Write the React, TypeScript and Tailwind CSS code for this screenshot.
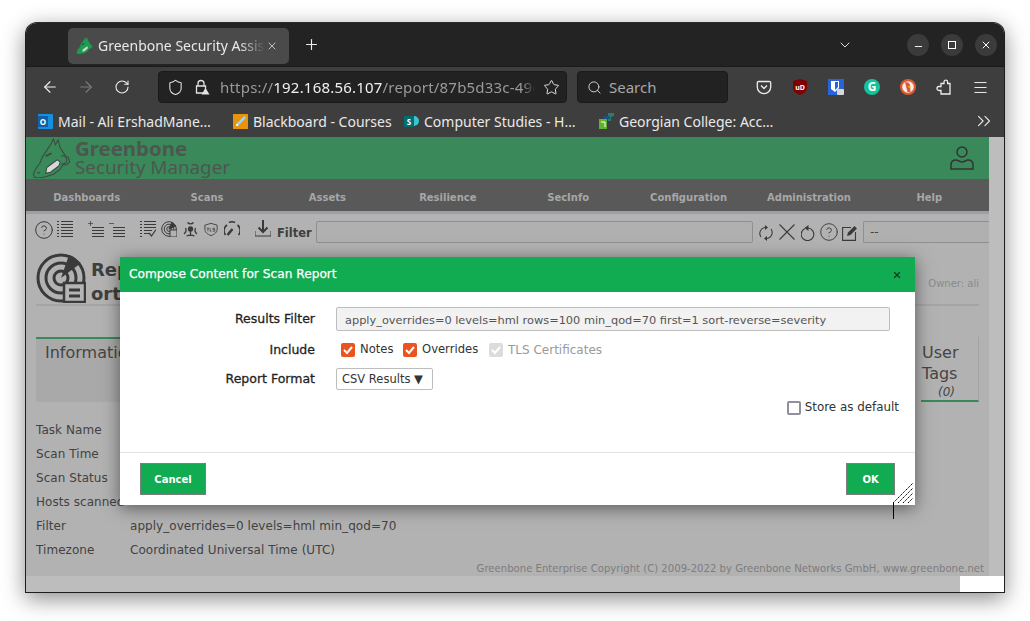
import {
  ArrowLeft,
  ArrowRight,
  ChevronDown,
  ChevronsRight,
  CircleHelp,
  Menu,
  Minus,
  Plus,
  RotateCw,
  Search,
  Shield,
  Star,
  X,
} from "lucide-react";

const navItems = ["Dashboards", "Scans", "Assets", "Resilience", "SecInfo", "Configuration", "Administration", "Help"];

const infoRows = [
  ["Task Name", ""],
  ["Scan Time", ""],
  ["Scan Status", ""],
  ["Hosts scanned", ""],
  ["Filter", "apply_overrides=0 levels=hml min_qod=70"],
  ["Timezone", "Coordinated Universal Time (UTC)"],
];

const Dragon = ({ className, filled }: { className: string; filled?: boolean }) => (
  <svg viewBox="0 0 40 42" className={className} fill={filled ? "currentColor" : "none"} stroke="currentColor" strokeWidth="1.1">
    <path d="M22 1l2 6 3-5 2 8 5 8 4 3 1 4-3 3-4 0-3 5-7 5-9 3-7 1-4-1-1-3 2-5 5-7 3-7 4-6 4-6z" />
    <path d="M15 31l11-8 3 2-1 4-9 7-5 1z" fill="#d8d8d8" />
    <path d="M14 19l6-3" strokeWidth="2" stroke={filled ? "#0c4a27" : "currentColor"} />
    <path d="M30 19c3-1 6 1 6 4s-3 5-6 4" />
    <path d="M5 36l3 1" />
  </svg>
);

const Bookmark = ({ icon, label, width }: { icon: React.ReactNode; label: string; width: string }) => (
  <div className={`flex items-center gap-[5px] ${width}`}>
    {icon}
    <span className="text-[14px] text-[#e9e9e9] whitespace-nowrap">{label}</span>
  </div>
);

const ListLines = ({ className, check }: { className: string; check?: boolean }) => (
  <svg viewBox="0 0 16 16" className={className} fill="none" stroke="currentColor" strokeWidth="1">
    <path d="M0 .5h2M0 3.500h2M0 6.500h2M0 9.500h2M0 12.500h2M0 15.500h2" strokeWidth="1" />
    {check ? (
      <>
        <path d="M4 .5h12M4 3.500h12M4 6.500h12M4 9.500h8M4 12.500h5" />
        <path d="M9 12l2.500 3L16 8.500" strokeWidth="1.200" />
      </>
    ) : (
      <path d="M4 .5h12M4 3.500h12M4 6.500h12M4 9.500h12M4 12.500h12M4 15.500h12" />
    )}
  </svg>
);

const ShortLines = () => (
  <svg viewBox="0 0 12 10" className="absolute left-[4px] top-[6px] w-[12px] h-[10px]" fill="none" stroke="currentColor" strokeWidth="1">
    <path d="M0 .5h12M0 3.500h12M0 6.500h12M0 9.500h12" />
  </svg>
);

const Check = () => (
  <svg viewBox="0 0 14 14" className="w-[14px] h-[14px]" fill="none" stroke="white" strokeWidth="2">
    <path d="M3 7l3 3 5-6" />
  </svg>
);

export default function App() {
  return (
    <div className="w-[1030px] h-[621px] bg-white pt-[22px] pl-[25px] overflow-hidden font-['Noto_Sans',sans-serif]">
      <div className="relative w-[980px] h-[571px] rounded-t-[12px] overflow-hidden border border-[#1e1e1e] border-t-[#2a2a2a] shadow-[0_6px_22px_rgba(0,0,0,0.45)] bg-[#bdbdbd] flex flex-col">
        {/* tab strip */}
        <div className="h-[43px] bg-[#232323] flex items-center pl-[42px] shrink-0">
          <div className="w-[221px] h-[36px] mt-[2px] bg-[#4a4a4a] rounded-[5px] flex items-center pl-[8px]">
            <Dragon className="w-[17px] h-[17px] text-[#1d9c52] shrink-0" filled />
            <span className="ml-[5px] w-[167px] overflow-hidden whitespace-nowrap text-[14px] text-[#e8e8e8] [mask-image:linear-gradient(to_right,black_85%,transparent)]">
              Greenbone Security Assistant
            </span>
            <X className="ml-[1px] w-[12px] h-[12px] text-[#e8e8e8]" strokeWidth={1.5} />
          </div>
          <Plus className="ml-[14px] w-[17px] h-[17px] text-[#eeeeee]" strokeWidth={1.6} />
          <ChevronDown className="ml-[517px] w-[16px] h-[16px] text-[#dddddd]" strokeWidth={1.5} />
          <div className="ml-[54px] flex gap-[12px]">
            <div className="w-[22px] h-[22px] rounded-full bg-[#3b3b3b] flex items-center justify-center">
              <Minus className="w-[11px] h-[11px] mt-[3px] text-white" />
            </div>
            <div className="w-[22px] h-[22px] rounded-full bg-[#3b3b3b] flex items-center justify-center">
              <div className="w-[8px] h-[8px] border border-white" />
            </div>
            <div className="w-[22px] h-[22px] rounded-full bg-[#3b3b3b] flex items-center justify-center">
              <X className="w-[12px] h-[12px] text-white" />
            </div>
          </div>
        </div>

        {/* address toolbar */}
        <div className="h-[37px] bg-[#3e3e3e] border-t border-[#1a1a1a] flex items-center pl-[15px] pt-[4px] shrink-0">
          <ArrowLeft className="w-[18px] h-[18px] text-[#efefef]" strokeWidth={1.5} />
          <ArrowRight className="ml-[18px] w-[18px] h-[18px] text-[#7b7b7b]" strokeWidth={1.5} />
          <RotateCw className="ml-[19px] w-[16px] h-[16px] text-[#efefef]" strokeWidth={1.6} />
          <div className="ml-[28px] w-[409px] h-[32px] bg-[#222222] border border-[#1a1a1a] rounded-[4px] flex items-center pl-[8px] pr-[6px] shrink-0">
            <Shield className="w-[17px] h-[17px] text-[#e2e2e2] shrink-0" strokeWidth={1.5} />
            <div className="relative ml-[10px] w-[16px] h-[16px] shrink-0">
              <svg viewBox="0 0 16 16" className="w-[16px] h-[16px]" fill="none" stroke="#e2e2e2" strokeWidth="1.3">
                <path d="M4 7V4.500a3 3 0 016 0V7M2.500 7h9v7h-9z" />
                <path d="M11.500 9l4 6.500h-8z" fill="#e2e2e2" stroke="none" />
              </svg>
            </div>
            <div className="ml-[10px] w-[315px] overflow-hidden whitespace-nowrap text-[15px] tracking-[0.2px] text-[#9a9a9a] [mask-image:linear-gradient(to_right,black_96%,transparent)]">
              https://<span className="text-[#f0f0f0]">192.168.56.107</span>/report/87b5d33c-49e6
            </div>
            <Star className="ml-auto w-[17px] h-[17px] text-[#e2e2e2]" strokeWidth={1.4} />
          </div>
          <div className="ml-[10px] w-[151px] h-[32px] bg-[#222222] border border-[#1a1a1a] rounded-[4px] flex items-center pl-[9px] shrink-0">
            <Search className="w-[15px] h-[15px] text-[#d8d8d8]" strokeWidth={1.5} />
            <span className="ml-[7px] text-[15px] text-[#a8a8a8]">Search</span>
          </div>
          <div className="ml-[28px] flex items-center gap-[20px]">
            <svg viewBox="0 0 16 16" className="w-[16px] h-[16px]" fill="none" stroke="#eeeeee" strokeWidth="1.3">
              <path d="M2.500 2.500h11a1.200 1.200 0 011.200 1.200V8a6.700 6.700 0 01-13.400 0V3.700a1.200 1.200 0 011.200-1.200z" />
              <path d="M5 6.500l3 3 3-3" />
            </svg>
            <div className="relative w-[16px] h-[16px]">
              <svg viewBox="0 0 16 16" className="w-[16px] h-[16px]">
                <path d="M8 0l7 2v7c0 3.500-4 6-7 7-3-1-7-3.500-7-7V2z" fill="#800000" />
              </svg>
              <span className="absolute inset-0 flex items-center justify-center text-[7px] font-bold leading-none text-white">uD</span>
            </div>
            <div className="relative w-[16px] h-[16px] bg-[#2a62d8]">
              <svg viewBox="0 0 16 16" className="w-[16px] h-[16px]">
                <path d="M3 2h8v7l-4 4-4-3z" fill="white" />
                <path d="M7 3h3v5l-3 3z" fill="#2a62d8" />
                <rect x="9" y="10" width="7" height="6" rx="1" fill="#d8d8d8" />
              </svg>
            </div>
            <div className="w-[16px] h-[16px] rounded-full bg-[#15c39a] flex items-center justify-center">
              <span className="text-[12px] font-bold leading-none text-white">G</span>
            </div>
            <svg viewBox="0 0 16 16" className="w-[16px] h-[16px]">
              <circle cx="8" cy="8" r="8" fill="#de5833" />
              <circle cx="8" cy="8" r="5.800" fill="#f7e9e3" />
              <path d="M5 3.500c3-1 5 .5 5 3l.5 6.500h-3L6 7z" fill="#de5833" />
              <path d="M8 7h3L9 9z" fill="#e9b52a" />
            </svg>
            <svg viewBox="0 0 16 16" className="w-[16px] h-[16px]" fill="none" stroke="#eeeeee" strokeWidth="1.3">
              <path d="M5 15V11.500H3a1.800 1.800 0 010-4h2V4.500h3V3a1.800 1.800 0 013.600 0v1.500H14V15z" />
            </svg>
            <Menu className="w-[17px] h-[17px] text-[#eeeeee]" strokeWidth={1.4} />
          </div>
        </div>

        {/* bookmarks */}
        <div className="h-[34px] bg-[#3e3e3e] flex items-center pl-[12px] pt-[2px] shrink-0">
          <Bookmark
            width="w-[195px]"
            label="Mail - Ali ErshadMane…"
            icon={
              <div className="w-[15px] h-[15px] bg-[#1490df] rounded-[1px] flex items-center">
                <div className="w-[10px] h-[11px] bg-[#0f5ea8] text-[8px] leading-[11px] text-white text-center font-bold">O</div>
              </div>
            }
          />
          <Bookmark
            width="w-[171px]"
            label="Blackboard - Courses"
            icon={
              <svg viewBox="0 0 16 16" className="w-[15px] h-[15px]">
                <rect width="16" height="16" fill="#e8930c" />
                <path d="M3 13l1-3 8-8 2 2-8 8z" fill="#a6d1e6" />
                <path d="M3 13l1-3 2 2z" fill="#fff" />
              </svg>
            }
          />
          <Bookmark
            width="w-[194px]"
            label="Computer Studies - H…"
            icon={
              <div className="relative w-[15px] h-[15px]">
                <div className="absolute right-0 top-[2px] w-[10px] h-[10px] rounded-full bg-[#37c6d0]" />
                <div className="absolute left-0 top-[2px] w-[10px] h-[11px] bg-[#036c70] text-[8px] leading-[11px] text-white text-center font-bold">S</div>
              </div>
            }
          />
          <Bookmark
            width="w-[375px]"
            label="Georgian College: Acc…"
            icon={
              <svg viewBox="0 0 16 16" className="w-[16px] h-[16px]">
                <path d="M10 0h6v3l-3 1v4h-3z" fill="#2e7d6b" />
                <path d="M6 3h6v3H9v5H6z" fill="#1c4f8c" />
                <path d="M1 6h8v10H1z" fill="#62b22f" />
                <path d="M3 9h4v5" fill="none" stroke="#fff" strokeWidth="1" />
              </svg>
            }
          />
          <ChevronsRight className="w-[22px] h-[22px] text-[#e8e8e8]" strokeWidth={1.2} />
        </div>

        {/* dimmed page */}
        <div className="relative flex-1 bg-[#bdbdbd] overflow-hidden font-['DejaVu_Sans',sans-serif]">
          <div className="w-[963px] h-[439px] bg-[#b2b2b2]">
            <div className="h-[42px] bg-[#3a895a] flex items-center pl-[6px] pr-[15px]">
              <Dragon className="w-[39px] h-[40px] text-[#3a4a40] shrink-0" />
              <div className="ml-[4px] text-[#4e5650] font-['Noto_Sans',sans-serif]">
                <div className="text-[20.400px] font-bold leading-[19px]">Greenbone</div>
                <div className="text-[18.800px] leading-[19px] whitespace-nowrap">Security Manager</div>
              </div>
              <svg viewBox="0 0 24 24" className="ml-auto w-[24px] h-[24px] text-[#333333]" fill="none" stroke="currentColor" strokeWidth="1.500">
                <circle cx="12" cy="6" r="5" />
                <path d="M1 23v-4c0-3 2-5 5-5 2 0 4 2 6 2s4-2 6-2c3 0 5 2 5 5v4z" />
              </svg>
            </div>
            <div className="h-[35px] bg-[#595959] border-b-[3px] border-[#9c9ea8] grid grid-cols-8">
              {navItems.map((item) => (
                <div key={item} className="flex items-center justify-center pt-[4px] pl-[1px] text-[10px] font-bold text-[#a7a7a7]">
                  {item}
                </div>
              ))}
            </div>

            <div className="h-[34px] pl-[10px] pt-[7px] flex items-start text-[#3a3a3a]">
              <CircleHelp className="-ml-[2px] -mt-[1px] w-[20px] h-[20px]" strokeWidth={1.2} />
              <ListLines className="ml-[3px] w-[16px] h-[16px]" />
              <div className="relative ml-[15px] w-[16px] h-[16px]">
                <Plus className="absolute -left-[1px] -top-[1px] w-[7px] h-[7px]" strokeWidth={2.500} />
                <ShortLines />
              </div>
              <div className="relative ml-[5px] w-[16px] h-[16px]">
                <Minus className="absolute -left-[1px] -top-[1px] w-[7px] h-[7px]" strokeWidth={2.500} />
                <ShortLines />
              </div>
              <ListLines className="ml-[15px] w-[16px] h-[16px]" check />
              <svg viewBox="0 0 16 16" className="ml-[5px] w-[16px] h-[16px]" fill="none" stroke="currentColor" strokeWidth="1">
                <circle cx="8" cy="8" r="7.300" />
                <circle cx="8" cy="8" r="4.800" />
                <circle cx="8" cy="8" r="2.300" />
                <path d="M8 8l3-7 4 4z" fill="currentColor" />
                <rect x="9" y="9" width="7" height="7" fill="#b2b2b2" />
              </svg>
              <svg viewBox="0 0 16 16" className="ml-[5px] w-[17px] h-[16px]" fill="none" stroke="currentColor" strokeWidth="1.300">
                <circle cx="8" cy="8" r="2" fill="currentColor" />
                <path d="M5 1.500a4 4 0 006 0M1.500 13a5 5 0 001.500-6M14.500 13a5 5 0 01-1.500-6M8 10v5M4 15c2-1 6-1 8 0" />
              </svg>
              <svg viewBox="0 0 16 16" className="ml-[5px] mt-[1px] w-[14px] h-[15px]" fill="none" stroke="currentColor" strokeWidth="1">
                <path d="M8 1l7 2v5c0 3-3 5.500-7 7-4-1.500-7-4-7-7V3z" />
                <path d="M3 6.500h3M4.500 6.500V10M7 6.500V10h1.500M12.500 6.500H10.200V8h2.200v2H10" strokeWidth="0.800" />
              </svg>
              <svg viewBox="0 0 16 16" className="ml-[6px] w-[16px] h-[16px]" fill="none" stroke="currentColor" strokeWidth="1.600">
                <path d="M1.500 14A7 7 0 013 4M5 1.500a7 7 0 016 0M13.500 4a7 7 0 011 10" />
                <path d="M3.500 14l5-6" strokeWidth="2.600" />
              </svg>
              <svg viewBox="0 0 16 17" className="ml-[15px] -mt-[1px] w-[16px] h-[17px]" fill="none" stroke="currentColor" strokeWidth="1.500">
                <path d="M0 11v5h16v-5" strokeWidth="1" />
                <path d="M8 0v12" strokeWidth="2" />
                <path d="M3.500 7.500L8 12l4.500-4.500" strokeWidth="2" />
              </svg>
              <span className="ml-[6px] mt-[4px] w-[39px] text-[11.500px] leading-[16px] font-bold text-[#3f3f3f]">Filter</span>
              <div className="w-[437px] h-[22px] border border-[#8f8f8f] rounded-[2px] bg-[#b0b0b0] shrink-0" />
              <svg viewBox="0 0 14 16" className="ml-[6px] mt-[4px] w-[14px] h-[16px]" fill="none" stroke="currentColor" strokeWidth="1.100">
                <path d="M2 12a6 6 0 014-9.500M12 4a6 6 0 01-4 9.500" />
                <path d="M6 0v5L9 2.500zM8 11v5l-3-2.500z" fill="currentColor" stroke="none" />
              </svg>
              <svg viewBox="0 0 16 16" className="ml-[6px] mt-[3px] w-[16px] h-[16px]" fill="none" stroke="currentColor" strokeWidth="1.100">
                <path d="M.5.5l15 15M15.500.5l-15 15" />
              </svg>
              <svg viewBox="0 0 14 16" className="ml-[6px] mt-[4px] w-[14px] h-[16px]" fill="none" stroke="currentColor" strokeWidth="1.100">
                <path d="M4 3.500a6.300 6.300 0 103 -.5" />
                <path d="M7.500 0v6L3.500 3z" fill="currentColor" stroke="none" />
              </svg>
              <CircleHelp className="ml-[4px] mt-[1px] w-[20px] h-[20px]" strokeWidth={1.1} />
              <svg viewBox="0 0 16 16" className="ml-[3px] mt-[4px] w-[16px] h-[16px]" fill="none" stroke="currentColor" strokeWidth="1.100">
                <path d="M9 2.500H.6v12.900h12.900V7" />
                <path d="M5 11l1-3.500L12.500 1l2.500 2.500L8.500 10z" fill="currentColor" stroke="none" />
              </svg>
              <div className="ml-[5px] flex-1 h-[22px] border border-[#8f8f8f] border-r-0 rounded-l-[2px] bg-[#b0b0b0] pl-[6px] text-[12px] leading-[20px] text-[#444444]">
                --
              </div>
            </div>

            {/* report title */}
            <div className="mx-[10px] mt-[5px] h-[53px] border-b-2 border-[#a5a5a5] flex">
              <svg viewBox="0 0 50 50" className="w-[50px] h-[50px] shrink-0 text-[#3a3a3a]" fill="none" stroke="currentColor" strokeWidth="3">
                <circle cx="25" cy="25" r="23" />
                <circle cx="25" cy="25" r="15" />
                <circle cx="25" cy="25" r="7" />
                <path d="M25 25l8-23 12 8z" fill="currentColor" stroke="none" />
                <rect x="28" y="30" width="21" height="19" fill="#b5b5b5" strokeWidth="2.500" />
                <path d="M33 37h11M33 43h11" strokeWidth="3" />
              </svg>
              <div className="ml-[5px] mt-[5px] text-[18px] font-bold leading-[24px] text-[#3f3f3f]">
                <div>Report</div>
                <div>ort</div>
              </div>
              <div className="ml-auto mt-[23px] text-[10px] text-[#8a8a8a]">Owner: ali</div>
            </div>

            {/* tabs */}
            <div className="mx-[10px] mt-[31px] h-[65px] flex justify-between">
              <div className="w-[160px] bg-[#a9a9a9] border-t-2 border-[#3a895a] pl-[9px] pt-[2px] text-[16px] text-[#454545]">
                Information
              </div>
              <div className="w-[58px] border-r border-[#a3a3a3] border-b-2 border-b-[#3a895a] pl-[1px] pt-[5px] text-[16px] leading-[21px] text-[#454545]">
                User
                <br />
                Tags
                <div className="mt-[3px] pl-[16px] text-[12px] italic leading-[10px]">(0)</div>
              </div>
            </div>

            <div className="mx-[10px] mt-[16px]">
              {infoRows.map(([label, value]) => (
                <div key={label} className="h-[24px] flex items-center text-[12px] tracking-[0.05px] text-[#424242]">
                  <div className="w-[94px] shrink-0 whitespace-nowrap">{label}</div>
                  <div>{value}</div>
                </div>
              ))}
            </div>
            <div className="text-right pr-[5px] text-[10.100px] leading-[14px] text-[#7d7d7d]">
              Greenbone Enterprise Copyright (C) 2009-2022 by Greenbone Networks GmbH, www.greenbone.net
            </div>
          </div>

          {/* strip below the page */}
          <div className="flex h-[16px]">
            <div className="ml-auto w-[44px] bg-white" />
          </div>

          {/* compose dialog */}
          <div className="absolute left-[94px] top-[120px] w-[795px] h-[248px] bg-white shadow-[0_3px_16px_rgba(0,0,0,0.5)] flex flex-col">
            <div className="h-[35px] bg-[#11ab51] flex items-center pl-[9px] pr-[13px] text-white text-[12.200px] [-webkit-text-stroke:0.25px_white]">
              Compose Content for Scan Report
              <X className="ml-auto w-[10px] h-[10px] text-[#0d3a20]" strokeWidth={3} />
            </div>
            <div className="flex-1 text-[11.600px] text-[#333333]">
              <div className="mt-[15px] flex items-center h-[24px]">
                <div className="w-[195px] pt-[1px] text-right text-[12.500px] text-[#1f1f1f] [-webkit-text-stroke:0.3px_#1f1f1f]">Results Filter</div>
                <div className="ml-[21px] w-[554px] h-[24px] bg-[#f2f2f2] border border-[#bdbdbd] rounded-[2px] pl-[8px] text-[11.350px] leading-[24px] text-[#555555]">
                  apply_overrides=0 levels=hml rows=100 min_qod=70 first=1 sort-reverse=severity
                </div>
              </div>
              <div className="mt-[10px] flex items-center h-[18px]">
                <div className="w-[195px] text-right text-[12.500px] text-[#1f1f1f] [-webkit-text-stroke:0.3px_#1f1f1f]">Include</div>
                <div className="ml-[26px] w-[14px] h-[14px] shrink-0 rounded-[2px] bg-[#e95420] flex items-center justify-center">
                  <Check />
                </div>
                <span className="ml-[5px] w-[43px]">Notes</span>
                <div className="w-[14px] h-[14px] shrink-0 rounded-[2px] bg-[#e95420] flex items-center justify-center">
                  <Check />
                </div>
                <span className="ml-[5px] w-[67px]">Overrides</span>
                <div className="w-[14px] h-[14px] shrink-0 rounded-[2px] bg-[#dcdcdc] flex items-center justify-center">
                  <Check />
                </div>
                <span className="ml-[5px] text-[12px] text-[#9a9a9a]">TLS Certificates</span>
              </div>
              <div className="mt-[9px] flex items-center h-[22px]">
                <div className="w-[195px] text-right text-[12.500px] text-[#1f1f1f] [-webkit-text-stroke:0.3px_#1f1f1f]">Report Format</div>
                <div className="ml-[21px] w-[97px] h-[22px] border border-[#bdbdbd] rounded-[2px] pl-[5px] text-[11.500px] leading-[20px] text-[#333333]">
                  CSV Results ▼
                </div>
              </div>
              <div className="mt-[9px] flex items-center justify-end pr-[16px] h-[18px]">
                <div className="w-[14px] h-[14px] border-2 border-[#8f8f9d] rounded-[2px]" />
                <span className="ml-[4px] text-[11.900px]">Store as default</span>
              </div>
            </div>
            <div className="relative h-[53px] border-t border-[#e2e2e2] flex items-start justify-between px-[20px] pt-[10px]">
              <div className="w-[66px] h-[32px] pt-[1px] bg-[#11ab51] border border-[#7d7d7d] text-white text-[10px] font-bold flex items-center justify-center">Cancel</div>
              <div className="w-[49px] h-[32px] pt-[1px] bg-[#11ab51] border border-[#7d7d7d] text-white text-[10px] font-bold flex items-center justify-center">OK</div>
              <svg viewBox="0 0 20 20" className="absolute right-[2px] bottom-[2px] w-[20px] h-[20px]" stroke="black" strokeWidth="1">
                <path d="M0 20L20 0M5 20L20 5M10 20L20 10M15 20L20 15" strokeDasharray="1.500 0.800" />
              </svg>
            </div>
          </div>
          {/* cursor stem */}
          <div className="absolute left-[867px] top-[366px] w-px h-[16px] bg-black" />
        </div>
      </div>
    </div>
  );
}
